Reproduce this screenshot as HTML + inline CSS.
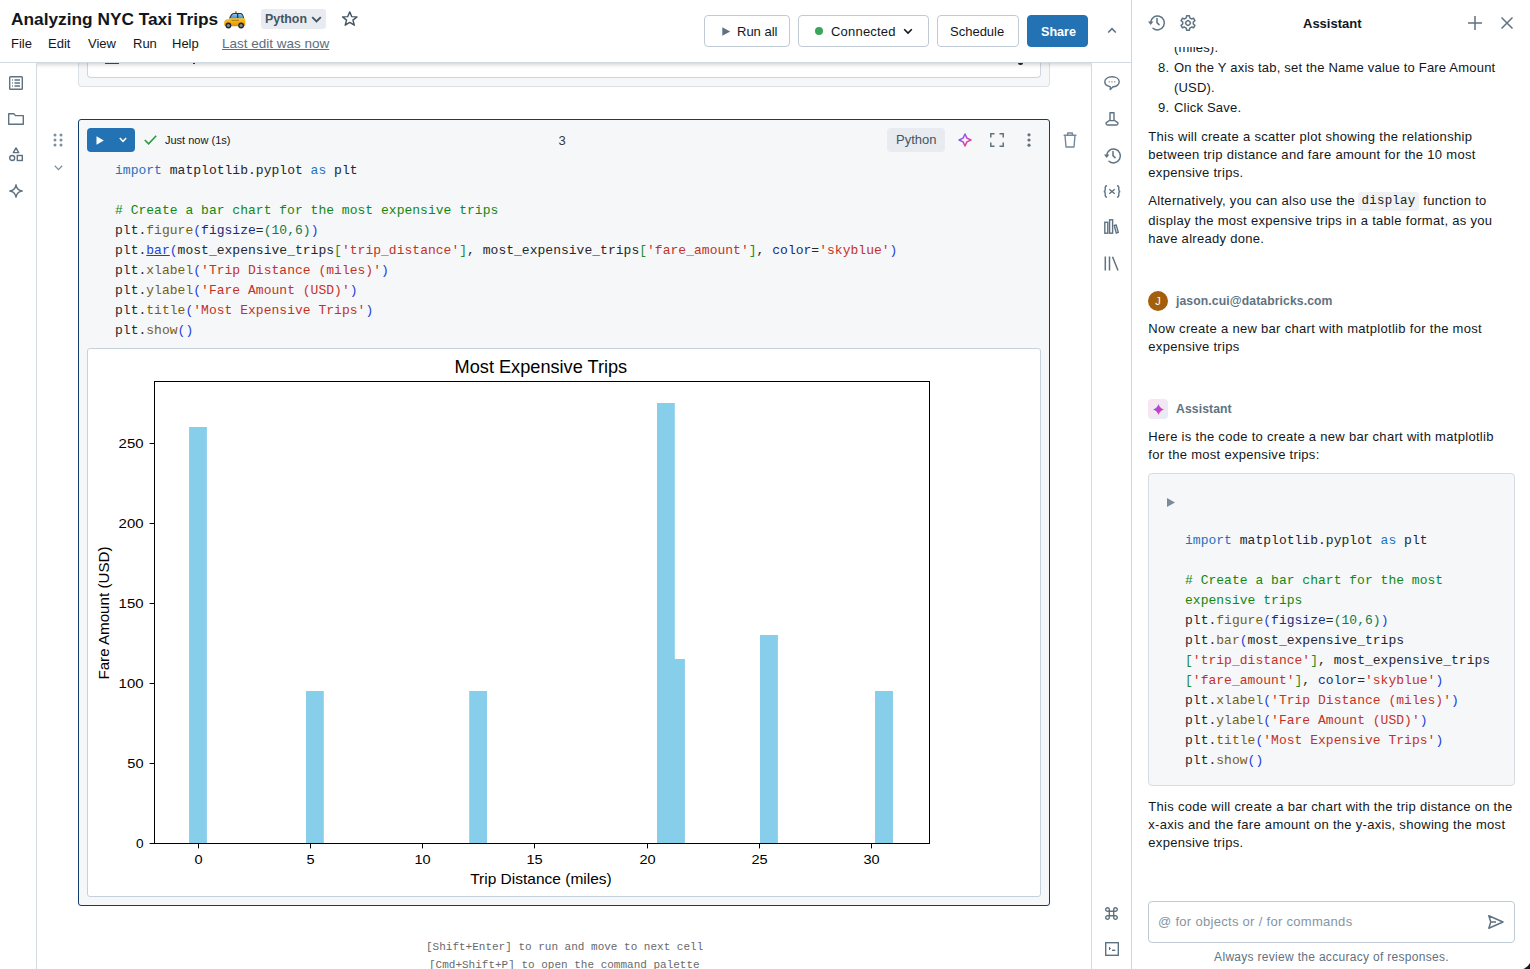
<!DOCTYPE html>
<html><head><meta charset="utf-8">
<style>
*{box-sizing:border-box;margin:0;padding:0}
html,body{width:1530px;height:969px;overflow:hidden;background:#fff;font-family:"Liberation Sans",sans-serif;color:#11171c}
.abs{position:absolute}
.nw{white-space:nowrap}
#header{position:absolute;left:0;top:0;width:1131px;height:63px;background:#fff;z-index:5;border-bottom:1px solid #d2d9e0}
#leftbar{position:absolute;left:0;top:62px;width:37px;height:907px;border-right:1px solid #d3dae2;background:#fff}
#rightbar{position:absolute;left:1091px;top:62px;width:40px;height:907px;border-left:1px solid #d3dae2;background:#fff;z-index:4}
#panel{position:absolute;left:1131px;top:0;width:399px;height:969px;border-left:1px solid #cfd6dd;background:#fff;overflow:hidden}
.btn{position:absolute;top:15px;height:32px;border:1px solid #c0cad4;border-radius:4px;background:#fff;font-size:13px;color:#11171c}
.btn span{position:absolute;top:8px;line-height:16px;white-space:nowrap}
svg.i{position:absolute;overflow:visible}
.code{position:absolute;font-family:"Liberation Mono",monospace;font-size:13px;letter-spacing:0.022px;line-height:20px;white-space:pre;color:#24282d}
.kw{color:#2372c0}.cm{color:#128712}.fn{color:#7a5d15}.st{color:#c4321f}.pn{color:#1c3fd8}.nm{color:#0f7a4f}.ar{color:#1b2a78}.br{color:#248a30}
.pt{position:absolute;font-size:13px;line-height:18px;color:#11171c;white-space:nowrap;letter-spacing:0.3px}
</style></head><body>

<!-- ============ HEADER ============ -->
<div id="header">
  <div class="abs nw" style="left:11px;top:7px;font-size:17.3px;font-weight:bold;line-height:24px;color:#11171c">Analyzing NYC Taxi Trips</div>
  <!-- taxi -->
  <svg class="i" style="left:224px;top:11px" width="22" height="18" viewBox="0 0 22 18">
    <defs><linearGradient id="tb" x1="0" y1="0" x2="0" y2="1"><stop offset="0" stop-color="#8cc8f0"/><stop offset="1" stop-color="#3d8ee0"/></linearGradient>
    <linearGradient id="ty" x1="0" y1="0" x2="0" y2="1"><stop offset="0" stop-color="#f7c824"/><stop offset="0.6" stop-color="#f0a70e"/><stop offset="1" stop-color="#e08a0a"/></linearGradient></defs>
    <rect x="10.8" y="0.2" width="2.2" height="1.8" rx="0.6" fill="#b58f52"/>
    <path d="M5 7.6 Q6.8 2.4 9.5 2 L17 2 Q19.2 2.2 20.3 7.6 Z" fill="#2c3540"/>
    <path d="M6.4 7.3 Q7.8 3.2 10 3 L13 3 L13 7.3 Z M14.3 3 L16.6 3 Q18.6 3.4 19.2 7.3 L14.3 7.3 Z" fill="url(#tb)"/>
    <path d="M0.3 11 Q0.6 8.6 2.8 8.3 L6 7.9 L6.5 7.2 L20.6 7.2 Q21.3 7.6 21.3 9 L21.3 14.2 Q21 15.3 19.5 15.3 L2 15.3 Q0.3 15.2 0.2 13.6 Z" fill="url(#ty)"/>
    <path d="M7.5 9.3 H15" stroke="#8a5a10" stroke-width="0.7"/>
    <circle cx="4.4" cy="14.5" r="2.9" fill="#1c2230"/><circle cx="4.4" cy="14.5" r="1.6" fill="#8a8a8a"/>
    <circle cx="17.1" cy="14.5" r="2.9" fill="#1c2230"/><circle cx="17.1" cy="14.5" r="1.6" fill="#8a8a8a"/>
  </svg>
  <!-- python badge -->
  <div class="abs" style="left:261px;top:9px;width:65px;height:20px;background:#e8ecf0;border-radius:3px"></div>
  <div class="abs nw" style="left:265px;top:11px;font-size:12.4px;line-height:16px;font-weight:bold;color:#445461">Python</div>
  <svg class="i" style="left:310.5px;top:16px" width="11" height="7" viewBox="0 0 11 7"><path d="M1.2 1.2 L5.5 5.5 L9.8 1.2" stroke="#445461" stroke-width="1.9" fill="none"/></svg>
  <!-- star -->
  <svg class="i" style="left:342px;top:11px" width="15.5" height="15" viewBox="1.5 1.5 21 20"><path d="M12 2.5 L14.8 9 L21.8 9.3 L16.3 13.7 L18.2 20.6 L12 16.7 L5.8 20.6 L7.7 13.7 L2.2 9.3 L9.2 9 Z" stroke="#445461" stroke-width="1.9" fill="none" stroke-linejoin="round"/></svg>
  <!-- menu -->
  <div class="abs nw" style="left:11px;top:36px;font-size:13px;line-height:16px;color:#11171c">File</div>
  <div class="abs nw" style="left:48px;top:36px;font-size:13px;line-height:16px;color:#11171c">Edit</div>
  <div class="abs nw" style="left:88px;top:36px;font-size:13px;line-height:16px;color:#11171c">View</div>
  <div class="abs nw" style="left:133px;top:36px;font-size:13px;line-height:16px;color:#11171c">Run</div>
  <div class="abs nw" style="left:172px;top:36px;font-size:13px;line-height:16px;color:#11171c">Help</div>
  <div class="abs nw" style="left:222px;top:36px;font-size:13.5px;line-height:16px;color:#5a6e7e;text-decoration:underline">Last edit was now</div>
  <!-- buttons -->
  <div class="btn" style="left:704px;width:86px">
    <svg class="i" style="left:17px;top:10.5px" width="8.5" height="9" viewBox="0 0 8.5 9"><path d="M0.3 0.2 L8.2 4.5 L0.3 8.8 Z" fill="#5f7281"/></svg>
    <span style="left:32px">Run all</span>
  </div>
  <div class="btn" style="left:798px;width:131px">
    <div class="abs" style="left:16px;top:11px;width:8px;height:8px;border-radius:50%;background:#3ba55c"></div>
    <span style="left:32px;letter-spacing:0.2px">Connected</span>
    <svg class="i" style="left:104px;top:12px" width="10" height="7" viewBox="0 0 10 7"><path d="M1.2 1.2 L5 5 L8.8 1.2" stroke="#11171c" stroke-width="1.6" fill="none"/></svg>
  </div>
  <div class="btn" style="left:937px;width:82px"><span style="left:12px">Schedule</span></div>
  <div class="btn" style="left:1027px;width:61px;background:#2272b4;border-color:#2272b4;color:#fff;font-weight:bold"><span style="left:13px;font-size:12.6px">Share</span></div>
  <svg class="i" style="left:1107px;top:27px" width="10" height="7" viewBox="0 0 10 7"><path d="M1.2 5.5 L5 1.7 L8.8 5.5" stroke="#5f7281" stroke-width="1.6" fill="none"/></svg>
</div>

<!-- ============ LEFT BAR ============ -->
<div id="leftbar">
  <!-- list -->
  <svg class="i" style="left:9px;top:14px" width="14" height="14" viewBox="0 0 14 14" fill="none" stroke="#5f7281" stroke-width="1.4">
    <rect x="0.7" y="0.7" width="12.6" height="12.6" rx="0.8"/>
    <path d="M5.5 4 H11 M5.5 7 H11 M5.5 10 H11" /><path d="M3 4 H3.8 M3 7 H3.8 M3 10 H3.8"/>
  </svg>
  <!-- folder -->
  <svg class="i" style="left:8px;top:51px" width="16" height="12" viewBox="0 0 16 12" fill="none" stroke="#5f7281" stroke-width="1.4">
    <path d="M0.7 0.7 H5.8 L7.5 2.6 H15.3 V11.3 H0.7 Z" stroke-linejoin="round"/>
  </svg>
  <!-- shapes -->
  <svg class="i" style="left:9px;top:85px" width="14" height="15" viewBox="0 0 14 15" fill="none" stroke="#5f7281" stroke-width="1.4">
    <path d="M7 0.9 L9.7 5.6 H4.3 Z" stroke-linejoin="round"/>
    <circle cx="3.2" cy="11" r="2.5"/><rect x="8.3" y="8.5" width="5" height="5"/>
  </svg>
  <!-- sparkle -->
  <svg class="i" style="left:9px;top:122px" width="14" height="14" viewBox="0 0 14 14" fill="none" stroke="#5f7281" stroke-width="1.4">
    <path d="M7 0.8 Q7.8 6.2 13.2 7 Q7.8 7.8 7 13.2 Q6.2 7.8 0.8 7 Q6.2 6.2 7 0.8 Z" stroke-linejoin="round"/>
  </svg>
</div>

<!-- ============ RIGHT BAR ============ -->
<div id="rightbar">
  <!-- comment -->
  <svg class="i" style="left:12px;top:14px" width="16" height="15" viewBox="0 0 16 15" fill="none" stroke="#5f7281" stroke-width="1.4">
    <path d="M8 0.8 C12.2 0.8 15.2 2.9 15.2 5.8 C15.2 8.7 12.2 10.8 9 10.8 L6.3 13.6 L6.2 10.6 C3 10.2 0.8 8.2 0.8 5.8 C0.8 2.9 3.8 0.8 8 0.8 Z" stroke-linejoin="round"/>
    <path d="M4.8 5.8 H5.6 M7.6 5.8 H8.4 M10.4 5.8 H11.2" stroke-width="1.6"/>
  </svg>
  <!-- flask -->
  <svg class="i" style="left:13px;top:50px" width="14" height="14" viewBox="0 0 14 14" fill="none" stroke="#5f7281" stroke-width="1.4">
    <path d="M5 0.8 H9 V8 L12.6 10.6 Q13.2 11.2 12.8 12.3 Q12.5 13 11.6 13 H2.4 Q1.5 13 1.2 12.3 Q0.8 11.2 1.4 10.6 L5 8 Z M5 8.6 H9" stroke-linejoin="round"/>
  </svg>
  <!-- history -->
  <svg class="i" style="left:11.5px;top:85.5px" width="17" height="16" viewBox="0 0 17 16" fill="none" stroke="#5f7281" stroke-width="1.5">
    <path d="M2.6 7.6 A6.9 6.9 0 1 1 5 13.2" stroke-linecap="round"/>
    <path d="M0 6.4 L2.7 10.1 L5.4 6.4 Z" fill="#5f7281" stroke="none"/>
    <path d="M9 3.4 V7.6 L11 9.6" stroke-linecap="round"/>
  </svg>
  <!-- {x} -->
  <svg class="i" style="left:11px;top:123px" width="18" height="13" viewBox="0 0 18 13" fill="none" stroke="#5f7281" stroke-width="1.4">
    <path d="M4 0.8 Q2.2 0.8 2.2 2.5 V4.8 Q2.2 6.5 0.7 6.5 Q2.2 6.5 2.2 8.2 V10.5 Q2.2 12.2 4 12.2"/>
    <path d="M14 0.8 Q15.8 0.8 15.8 2.5 V4.8 Q15.8 6.5 17.3 6.5 Q15.8 6.5 15.8 8.2 V10.5 Q15.8 12.2 14 12.2"/>
    <path d="M6.3 4.2 L11.7 8.8 M11.7 4.2 L6.3 8.8"/>
  </svg>
  <!-- books -->
  <svg class="i" style="left:12px;top:157px" width="15" height="15" viewBox="0 0 15 15" fill="none" stroke="#5f7281" stroke-width="1.4">
    <rect x="0.8" y="3.3" width="3" height="10.9"/><rect x="5.6" y="0.8" width="3" height="13.4"/>
    <path d="M10.2 6.5 L12.2 6 L14.3 13.4 L12.3 14 Z" stroke-linejoin="round"/>
  </svg>
  <!-- library -->
  <svg class="i" style="left:12px;top:194px" width="15" height="15" viewBox="0 0 15 15" fill="none" stroke="#5f7281" stroke-width="1.5">
    <path d="M1.3 0.5 V14.5 M5.5 0.5 V14.5 M8.5 0.8 L14 14.5"/>
  </svg>
  <!-- cmd -->
  <svg class="i" style="left:13px;top:845px" width="13" height="13" viewBox="0 0 13 13" fill="none" stroke="#5f7281" stroke-width="1.4">
    <path d="M4.3 4.3 V2.6 A1.8 1.8 0 1 0 2.6 4.3 H10.4 A1.8 1.8 0 1 0 8.7 2.6 V10.4 A1.8 1.8 0 1 0 10.4 8.7 H2.6 A1.8 1.8 0 1 0 4.3 10.4 Z"/>
  </svg>
  <!-- terminal -->
  <svg class="i" style="left:13px;top:880px" width="14" height="14" viewBox="0 0 14 14" fill="none" stroke="#5f7281" stroke-width="1.4">
    <rect x="0.7" y="0.7" width="12.6" height="12.6"/>
    <path d="M4 5 L5.6 6.5 L4 8" fill="#5f7281" stroke-width="1"/><path d="M7 8.3 H10.3"/>
  </svg>
</div>

<!-- ============ NOTEBOOK ============ -->
<div id="nb">
  <!-- previous cell remnants -->
  <div class="abs" style="left:78px;top:40px;width:972px;height:47px;background:#f6f7f9;border:1px solid #dbe1e7;border-top:none;border-radius:0 0 4px 4px"></div>
  <div class="abs" style="left:87px;top:40px;width:954px;height:38px;background:#fff;border:1px solid #cdd6df;border-top:none;border-radius:0 0 4px 4px"></div>

  <div class="abs" style="left:105px;top:62px;width:14px;height:2px;background:#3d4f5f"></div>
  <div class="abs" style="left:193px;top:62px;width:2px;height:2px;background:#333"></div>
  <div class="abs" style="left:1018px;top:62px;width:5px;height:2.5px;border-radius:0 0 3px 3px;background:#222"></div>
  <!-- drag handle + chevron -->
  <svg class="i" style="left:53px;top:133px" width="10" height="14" viewBox="0 0 10 14" fill="#7d8e9c">
    <circle cx="2" cy="2" r="1.5"/><circle cx="8" cy="2" r="1.5"/><circle cx="2" cy="7" r="1.5"/><circle cx="8" cy="7" r="1.5"/><circle cx="2" cy="12" r="1.5"/><circle cx="8" cy="12" r="1.5"/>
  </svg>
  <svg class="i" style="left:54px;top:165px" width="9" height="6" viewBox="0 0 9 6"><path d="M0.8 0.8 L4.5 4.6 L8.2 0.8" stroke="#7d8e9c" stroke-width="1.3" fill="none"/></svg>

  <!-- current cell -->
  <div class="abs" style="left:78px;top:119px;width:972px;height:787px;background:#f6f7f9;border:1px solid #0f3d6a;border-radius:3px"></div>
  <!-- run btn -->
  <div class="abs" style="left:87px;top:128px;width:48px;height:24px;background:#2272b4;border-radius:4px"></div>
  <svg class="i" style="left:96px;top:136px" width="8" height="9" viewBox="0 0 8 9"><path d="M0.5 0.3 L7.8 4.5 L0.5 8.7 Z" fill="#fff"/></svg>
  <svg class="i" style="left:119px;top:137px" width="8" height="6" viewBox="0 0 8 6"><path d="M0.8 1 L4 4.3 L7.2 1" stroke="#fff" stroke-width="1.5" fill="none"/></svg>
  <!-- check -->
  <svg class="i" style="left:144px;top:135px" width="13" height="10" viewBox="0 0 13 10"><path d="M0.8 5 L4.6 8.8 L12.2 0.8" stroke="#2b9a3e" stroke-width="1.6" fill="none"/></svg>
  <div class="abs nw" style="left:165px;top:133px;font-size:11px;line-height:14px;color:#11171c">Just now (1s)</div>
  <div class="abs nw" style="left:558.5px;top:133px;font-size:13px;line-height:15px;color:#2f3e4b">3</div>
  <!-- python badge -->
  <div class="abs" style="left:887px;top:128px;width:58px;height:24px;background:#e8ecf0;border-radius:4px"></div>
  <div class="abs nw" style="left:896px;top:132px;font-size:13px;line-height:16px;color:#445461">Python</div>
  <!-- sparkle gradient -->
  <svg class="i" style="left:958px;top:133px" width="14" height="14" viewBox="0 0 14 14" fill="none">
    <defs><linearGradient id="spg" x1="0.1" y1="0.1" x2="0.9" y2="0.9"><stop offset="0" stop-color="#4a86f5"/><stop offset="0.45" stop-color="#c23ad6"/><stop offset="1" stop-color="#f2456a"/></linearGradient></defs>
    <path d="M7 1 L8.9 5.1 L13 7 L8.9 8.9 L7 13 L5.1 8.9 L1 7 L5.1 5.1 Z" stroke="url(#spg)" stroke-width="1.5" stroke-linejoin="round"/>
  </svg>
  <!-- expand -->
  <svg class="i" style="left:990px;top:133px" width="14" height="14" viewBox="0 0 14 14" fill="none" stroke="#5f7281" stroke-width="1.5">
    <path d="M0.8 4.5 V0.8 H4.5 M9.5 0.8 H13.2 V4.5 M13.2 9.5 V13.2 H9.5 M4.5 13.2 H0.8 V9.5"/>
  </svg>
  <!-- kebab -->
  <svg class="i" style="left:1027px;top:133px" width="4" height="14" viewBox="0 0 4 14" fill="#5f7281"><circle cx="2" cy="1.8" r="1.6"/><circle cx="2" cy="7" r="1.6"/><circle cx="2" cy="12.2" r="1.6"/></svg>
  <!-- trash -->
  <svg class="i" style="left:1063px;top:132px" width="14" height="16" viewBox="0 0 14 16" fill="none" stroke="#76889a" stroke-width="1.4">
    <path d="M0.6 3.3 H13.4 M4.6 3.3 V1 H9.4 V3.3 M2 3.3 L3 15 H11 L12 3.3" stroke-linejoin="round"/>
  </svg>

  <!-- code -->
  <div class="code" style="left:115px;top:161px"><span class="kw">import</span> matplotlib.pyplot <span class="kw">as</span> plt

<span class="cm"># Create a bar chart for the most expensive trips</span>
plt.<span class="fn">figure</span><span class="pn">(</span><span class="ar">figsize</span>=<span class="nm">(10,6)</span><span class="pn">)</span>
plt.<span class="fn" style="color:#1c3fd8;text-decoration:underline">bar</span><span class="pn">(</span>most_expensive_trips<span class="br">[</span><span class="st">'trip_distance'</span><span class="br">]</span>, most_expensive_trips<span class="br">[</span><span class="st">'fare_amount'</span><span class="br">]</span>, <span class="ar">color</span>=<span class="st">'skyblue'</span><span class="pn">)</span>
plt.<span class="fn">xlabel</span><span class="pn">(</span><span class="st">'Trip Distance (miles)'</span><span class="pn">)</span>
plt.<span class="fn">ylabel</span><span class="pn">(</span><span class="st">'Fare Amount (USD)'</span><span class="pn">)</span>
plt.<span class="fn">title</span><span class="pn">(</span><span class="st">'Most Expensive Trips'</span><span class="pn">)</span>
plt.<span class="fn">show</span><span class="pn">()</span></div>

  <!-- output box -->
  <div class="abs" style="left:87px;top:348px;width:954px;height:549px;background:#fff;border:1px solid #c6d1dc;border-radius:3px"></div>
  <div id="chart"><svg class="i" style="left:87px;top:348px" width="954" height="549" viewBox="87 348 954 549" font-family="Liberation Sans, sans-serif" fill="#000">
<rect x="189.1" y="427" width="17.8" height="416.5" fill="#87ceeb"/>
<rect x="306" y="691" width="17.8" height="152.5" fill="#87ceeb"/>
<rect x="469.2" y="691" width="17.8" height="152.5" fill="#87ceeb"/>
<rect x="657" y="403" width="17.8" height="440.5" fill="#87ceeb"/>
<rect x="667" y="659" width="17.9" height="184.5" fill="#87ceeb"/>
<rect x="760" y="635" width="17.9" height="208.5" fill="#87ceeb"/>
<rect x="875" y="691" width="18.0" height="152.5" fill="#87ceeb"/>
<rect x="154.5" y="381.5" width="775.0" height="462.0" fill="none" stroke="#000" stroke-width="1"/>
<line x1="149.6" y1="843.5" x2="154.5" y2="843.5" stroke="#000" stroke-width="1"/>
<text x="135.9" y="848.4" font-size="13.4" textLength="7.6" lengthAdjust="spacingAndGlyphs">0</text>
<line x1="149.6" y1="763.5" x2="154.5" y2="763.5" stroke="#000" stroke-width="1"/>
<text x="127.3" y="768.4" font-size="13.4" textLength="16.2" lengthAdjust="spacingAndGlyphs">50</text>
<line x1="149.6" y1="683.5" x2="154.5" y2="683.5" stroke="#000" stroke-width="1"/>
<text x="118.6" y="688.4" font-size="13.4" textLength="24.9" lengthAdjust="spacingAndGlyphs">100</text>
<line x1="149.6" y1="603.5" x2="154.5" y2="603.5" stroke="#000" stroke-width="1"/>
<text x="118.6" y="608.4" font-size="13.4" textLength="24.9" lengthAdjust="spacingAndGlyphs">150</text>
<line x1="149.6" y1="523.5" x2="154.5" y2="523.5" stroke="#000" stroke-width="1"/>
<text x="118.6" y="528.4" font-size="13.4" textLength="24.9" lengthAdjust="spacingAndGlyphs">200</text>
<line x1="149.6" y1="443.5" x2="154.5" y2="443.5" stroke="#000" stroke-width="1"/>
<text x="118.6" y="448.4" font-size="13.4" textLength="24.9" lengthAdjust="spacingAndGlyphs">250</text>
<line x1="198.5" y1="843.5" x2="198.5" y2="848.4" stroke="#000" stroke-width="1"/>
<text x="194.4" y="863.7" font-size="13.4" textLength="8.1" lengthAdjust="spacingAndGlyphs">0</text>
<line x1="310.5" y1="843.5" x2="310.5" y2="848.4" stroke="#000" stroke-width="1"/>
<text x="306.4" y="863.7" font-size="13.4" textLength="8.1" lengthAdjust="spacingAndGlyphs">5</text>
<line x1="422.5" y1="843.5" x2="422.5" y2="848.4" stroke="#000" stroke-width="1"/>
<text x="414.4" y="863.7" font-size="13.4" textLength="16.2" lengthAdjust="spacingAndGlyphs">10</text>
<line x1="534.5" y1="843.5" x2="534.5" y2="848.4" stroke="#000" stroke-width="1"/>
<text x="526.4" y="863.7" font-size="13.4" textLength="16.2" lengthAdjust="spacingAndGlyphs">15</text>
<line x1="647.5" y1="843.5" x2="647.5" y2="848.4" stroke="#000" stroke-width="1"/>
<text x="639.4" y="863.7" font-size="13.4" textLength="16.2" lengthAdjust="spacingAndGlyphs">20</text>
<line x1="759.5" y1="843.5" x2="759.5" y2="848.4" stroke="#000" stroke-width="1"/>
<text x="751.4" y="863.7" font-size="13.4" textLength="16.2" lengthAdjust="spacingAndGlyphs">25</text>
<line x1="871.5" y1="843.5" x2="871.5" y2="848.4" stroke="#000" stroke-width="1"/>
<text x="863.4" y="863.7" font-size="13.4" textLength="16.2" lengthAdjust="spacingAndGlyphs">30</text>
<text x="454.6" y="372.8" font-size="17.7" textLength="172.6" lengthAdjust="spacingAndGlyphs">Most Expensive Trips</text>
<text x="470.2" y="883.9" font-size="13.75" textLength="141.6" lengthAdjust="spacingAndGlyphs">Trip Distance (miles)</text>
<text transform="translate(108.9 679.6) rotate(-90)" x="0" y="0" font-size="13.75" textLength="133.1" lengthAdjust="spacingAndGlyphs">Fare Amount (USD)</text>
</svg></div>

  <!-- hint -->
  <div class="abs nw" style="left:0;top:938px;width:1131px;text-align:center;font-family:'Liberation Mono',monospace;font-size:11px;line-height:18px;color:#67696b;padding-left:0">
    <div style="position:absolute;left:426px;top:0">[Shift+Enter] to run and move to next cell</div>
    <div style="position:absolute;left:429px;top:18px">[Cmd+Shift+P] to open the command palette</div>
  </div>
</div>

<!-- ============ NOTEBOOK ============ -->
<div id="nb"></div>

<div class="abs" style="left:37px;top:63px;width:1054px;height:6px;z-index:4;background:linear-gradient(rgba(0,0,0,0.14),rgba(0,0,0,0.03) 60%,rgba(0,0,0,0))"></div>
<!-- ============ PANEL ============ -->
<div id="panel">
  <!-- scrolled content -->
  <div class="abs" style="left:0;top:0;width:399px;height:969px">
    <div class="pt" style="left:42px;top:38px;line-height:20px;letter-spacing:0.2px">(miles).</div>
    <div class="pt" style="left:26px;top:58px;line-height:20px;letter-spacing:0.2px">8.</div>
    <div class="pt" style="left:42px;top:58px;line-height:20px;letter-spacing:0.2px">On the Y axis tab, set the Name value to Fare Amount</div>
    <div class="pt" style="left:42px;top:78px;line-height:20px;letter-spacing:0.2px">(USD).</div>
    <div class="pt" style="left:26px;top:98px;line-height:20px;letter-spacing:0.2px">9.</div>
    <div class="pt" style="left:42px;top:98px;line-height:20px;letter-spacing:0.2px">Click Save.</div>

    <div class="pt" style="left:16.3px;top:128px">This will create a scatter plot showing the relationship</div>
    <div class="pt" style="left:16.3px;top:146px">between trip distance and fare amount for the 10 most</div>
    <div class="pt" style="left:16.3px;top:164px">expensive trips.</div>

    <div class="pt" style="left:16.3px;top:192px">Alternatively, you can also use the <span style="display:inline-block;position:relative;top:-1.5px;margin-left:-1px;margin-right:0;font-family:'Liberation Mono',monospace;font-size:12.5px;letter-spacing:0.2px;background:#eff1f3;border-radius:3px;padding:0 4px 0 3.5px;line-height:19px;color:#1a1f24">display</span> function to</div>
    <div class="pt" style="left:16.3px;top:212px">display the most expensive trips in a table format, as you</div>
    <div class="pt" style="left:16.3px;top:230px">have already done.</div>

    <!-- user -->
    <div class="abs" style="left:16px;top:291px;width:20px;height:20px;border-radius:50%;background:#a35f0c;color:#fff;font-size:11px;line-height:20px;text-align:center">J</div>
    <div class="pt" style="left:44px;top:292px;font-weight:bold;color:#5f7281;font-size:12.2px;letter-spacing:0.1px">jason.cui@databricks.com</div>
    <div class="pt" style="left:16.3px;top:320px">Now create a new bar chart with matplotlib for the most</div>
    <div class="pt" style="left:16.3px;top:338px">expensive trips</div>

    <!-- assistant -->
    <div class="abs" style="left:16px;top:399px;width:20px;height:20px;border-radius:4px;background:linear-gradient(135deg,#fde3ee,#e6ecf8)"></div>
    <svg class="i" style="left:20.5px;top:403.5px" width="11" height="11" viewBox="0 0 10 10">
      <defs><linearGradient id="spg2" x1="0" y1="0" x2="0.9" y2="1"><stop offset="0" stop-color="#4f6ef5"/><stop offset="0.5" stop-color="#c03fda"/><stop offset="1" stop-color="#f5405a"/></linearGradient></defs>
      <path d="M5 0 Q6.2 3.8 10 5 Q6.2 6.2 5 10 Q3.8 6.2 0 5 Q3.8 3.8 5 0 Z" fill="url(#spg2)"/>
    </svg>
    <div class="pt" style="left:44px;top:400px;font-weight:bold;color:#5f7281;font-size:12.2px;letter-spacing:0.1px">Assistant</div>
    <div class="pt" style="left:16.3px;top:428px">Here is the code to create a new bar chart with matplotlib</div>
    <div class="pt" style="left:16.3px;top:446px">for the most expensive trips:</div>

    <!-- code block -->
    <div class="abs" style="left:16px;top:473px;width:367px;height:313px;background:#f6f7f9;border:1px solid #d5dce3;border-radius:4px"></div>
    <svg class="i" style="left:35px;top:498px" width="8" height="9" viewBox="0 0 8 9"><path d="M0 0 L8 4.5 L0 9 Z" fill="#7a8c9b"/></svg>
    <div class="code" style="left:53px;top:531px"><span class="kw">import</span> matplotlib.pyplot <span class="kw">as</span> plt

<span class="cm"># Create a bar chart for the most</span>
<span class="cm">expensive trips</span>
plt.<span class="fn">figure</span><span class="pn">(</span><span class="ar">figsize</span>=<span class="nm">(10,6)</span><span class="pn">)</span>
plt.<span class="fn">bar</span><span class="pn">(</span>most_expensive_trips
<span class="br">[</span><span class="st">'trip_distance'</span><span class="br">]</span>, most_expensive_trips
<span class="br">[</span><span class="st">'fare_amount'</span><span class="br">]</span>, <span class="ar">color</span>=<span class="st">'skyblue'</span><span class="pn">)</span>
plt.<span class="fn">xlabel</span><span class="pn">(</span><span class="st">'Trip Distance (miles)'</span><span class="pn">)</span>
plt.<span class="fn">ylabel</span><span class="pn">(</span><span class="st">'Fare Amount (USD)'</span><span class="pn">)</span>
plt.<span class="fn">title</span><span class="pn">(</span><span class="st">'Most Expensive Trips'</span><span class="pn">)</span>
plt.<span class="fn">show</span><span class="pn">()</span></div>

    <div class="pt" style="left:16.3px;top:798px">This code will create a bar chart with the trip distance on the</div>
    <div class="pt" style="left:16.3px;top:816px">x-axis and the fare amount on the y-axis, showing the most</div>
    <div class="pt" style="left:16.3px;top:834px">expensive trips.</div>
  </div>

  <!-- panel header -->
  <div class="abs" style="left:0;top:0;width:399px;height:47px;background:#fff">
    <svg class="i" style="left:16px;top:15px" width="17" height="16" viewBox="0 0 17 16" fill="none" stroke="#5f7281" stroke-width="1.5">
      <path d="M2.6 7.6 A6.9 6.9 0 1 1 5 13.2" stroke-linecap="round"/>
      <path d="M0 6.4 L2.7 10.1 L5.4 6.4 Z" fill="#5f7281" stroke="none"/>
      <path d="M9 3.4 V7.6 L11 9.6" stroke-linecap="round"/>
    </svg>
    <svg class="i" style="left:48px;top:14.5px" width="16" height="16" viewBox="0 0 16 16" fill="none" stroke="#5f7281" stroke-width="1.5" stroke-linejoin="round">
      <path d="M6.24 2.89 L6.61 0.83 L9.39 0.83 L9.76 2.89 L11.54 3.92 L13.51 3.21 L14.90 5.62 L13.30 6.97 L13.30 9.03 L14.90 10.38 L13.51 12.79 L11.54 12.08 L9.76 13.11 L9.39 15.17 L6.61 15.17 L6.24 13.11 L4.46 12.08 L2.49 12.79 L1.10 10.38 L2.70 9.03 L2.70 6.97 L1.10 5.62 L2.49 3.21 L4.46 3.92 Z"/>
      <rect x="5.9" y="5.9" width="4.2" height="4.2" rx="1.3" transform="rotate(45 8 8)"/>
    </svg>
    <div class="abs nw" style="left:171px;top:16px;font-size:13px;line-height:16px;font-weight:bold;color:#11171c;letter-spacing:0">Assistant</div>
    <svg class="i" style="left:336px;top:16px" width="14" height="14" viewBox="0 0 14 14"><path d="M7 0 V14 M0 7 H14" stroke="#5f7281" stroke-width="1.5"/></svg>
    <svg class="i" style="left:369px;top:17px" width="12" height="12" viewBox="0 0 12 12"><path d="M0.5 0.5 L11.5 11.5 M11.5 0.5 L0.5 11.5" stroke="#5f7281" stroke-width="1.5"/></svg>
  </div>

  <!-- input -->
  <div class="abs" style="left:16px;top:901px;width:367px;height:42px;background:#fff;border:1px solid #c0cad4;border-radius:4px"></div>
  <div class="pt" style="left:26px;top:913px;color:#8396a6;line-height:18px">@ for objects or / for commands</div>
  <svg class="i" style="left:356px;top:915px" width="16" height="14" viewBox="0 0 16 14" fill="none" stroke="#5f7281" stroke-width="1.5">
    <path d="M0.8 0.8 L15 7 L0.8 13.2 L2.8 7 Z M2.8 7 H8" stroke-linejoin="round"/>
  </svg>
  <div class="pt" style="left:0;top:949px;width:399px;text-align:center;font-size:12px;line-height:16px;color:#5f7281">Always review the accuracy of responses.</div>
</div>

<svg class="i" style="left:1520px;top:959px" width="10" height="10" viewBox="0 0 10 10"><path d="M10 4 V10 H3 Q8 8.5 10 4 Z" fill="#1a1a1a"/></svg>
</body></html>
